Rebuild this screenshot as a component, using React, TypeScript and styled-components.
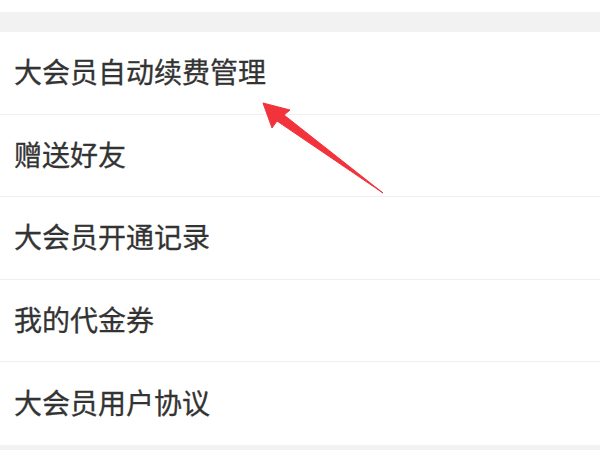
import styled, { createGlobalStyle } from 'styled-components'

const Global = createGlobalStyle`
  html, body {
    margin: 0;
    padding: 0;
    background: #ffffff;
  }
  body {
    font-family: "Noto Sans CJK SC", "Noto Sans", sans-serif;
  }
`

const Page = styled.div`
  position: relative;
  width: 600px;
  height: 450px;
  overflow: hidden;
  background: #ffffff;
  padding-top: 12px;
  box-sizing: border-box;
`

const Band = styled.div`
  height: 20px;
  background: #f2f2f2;
`

const List = styled.ul`
  list-style: none;
  margin: 0;
  padding: 0;
`

const Row = styled.li<{ $last?: boolean }>`
  height: 82.6px;
  box-sizing: border-box;
  display: flex;
  align-items: center;
  padding-left: 14px;
  padding-bottom: 3px;
  font-size: 28px;
  color: #333333;
  -webkit-text-stroke: 0.3px #333333;
  border-bottom: ${(p) => (p.$last ? 'none' : '1.5px solid #efefef')};
`

const Footer = styled.div`
  height: 20px;
  background: #f2f2f2;
`

const Arrow = styled.svg`
  position: absolute;
  left: 0;
  top: 0;
  pointer-events: none;
`

const items = ['大会员自动续费管理', '赠送好友', '大会员开通记录', '我的代金券', '大会员用户协议']

const App = () => {
  return (
    <>
      <Global />
      <Page>
        <Band />
        <List>
          {items.map((label, i) => (
            <Row key={label} $last={i === items.length - 1}>
              {label}
            </Row>
          ))}
        </List>
        <Footer />
        <Arrow width="600" height="450" viewBox="0 0 600 450">
          <path
            d="M263 103 L290 110 L284 115 L383 193 L277 121 L272 128 Z"
            fill="#f2333b"
            stroke="#f2333b"
            strokeWidth="1"
            strokeLinejoin="round"
          />
        </Arrow>
      </Page>
    </>
  )
}

export default App
